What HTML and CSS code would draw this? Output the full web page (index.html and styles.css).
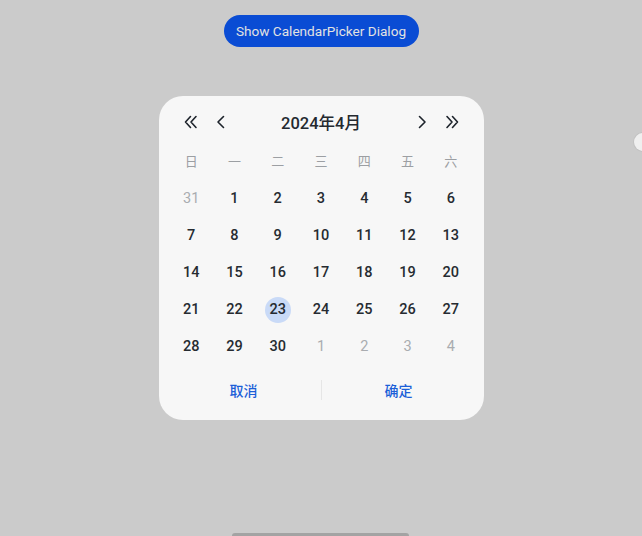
FILE: index.html
```html
<!DOCTYPE html>
<html lang="zh">
<head>
<meta charset="utf-8">
<link rel="stylesheet" href="styles.css">
</head>
<body>
<div class="page">
  <button class="show-btn">Show CalendarPicker Dialog</button>
  <div class="dialog">
    <div class="header">
      <span class="nav"><svg viewBox="0 0 24 24" width="24" height="24"><path d="M11.5 6.5 L6.5 12 L11.5 17.5 M17 6.5 L12 12 L17 17.5"/></svg></span>
      <span class="nav"><svg viewBox="0 0 24 24" width="24" height="24"><path d="M14.5 6.5 L9 12 L14.5 17.5"/></svg></span>
      <span class="title">2024年4月</span>
      <span class="nav"><svg viewBox="0 0 24 24" width="24" height="24"><path d="M9.5 6.5 L15 12 L9.5 17.5"/></svg></span>
      <span class="nav"><svg viewBox="0 0 24 24" width="24" height="24"><path d="M7 6.5 L12 12 L7 17.5 M12.5 6.5 L17.5 12 L12.5 17.5"/></svg></span>
    </div>
    <div class="weekdays">
      <span>日</span><span>一</span><span>二</span><span>三</span><span>四</span><span>五</span><span>六</span>
    </div>
    <div class="dates">
      <span class="muted">31</span><span>1</span><span>2</span><span>3</span><span>4</span><span>5</span><span>6</span>
      <span>7</span><span>8</span><span>9</span><span>10</span><span>11</span><span>12</span><span>13</span>
      <span>14</span><span>15</span><span>16</span><span>17</span><span>18</span><span>19</span><span>20</span>
      <span>21</span><span>22</span><span class="selected"><i>23</i></span><span>24</span><span>25</span><span>26</span><span>27</span>
      <span>28</span><span>29</span><span>30</span><span class="muted">1</span><span class="muted">2</span><span class="muted">3</span><span class="muted">4</span>
    </div>
    <div class="footer">
      <span class="action">取消</span>
      <span class="divider"></span>
      <span class="action">确定</span>
    </div>
  </div>
</div>
<div class="side-knob"></div>
<div class="home-bar"></div>
</body>
</html>
```
FILE: styles.css
```css
html, body {
  margin: 0;
  padding: 0;
}
body {
  width: 642px;
  height: 536px;
  overflow: hidden;
  background: #cbcbcb;
  font-family: Roboto, "Noto Sans CJK SC", sans-serif;
  position: relative;
}
.page {
  display: flex;
  flex-direction: column;
  align-items: center;
  padding-top: 15px;
}
.show-btn {
  height: 32px;
  width: 195px;
  border: none;
  border-radius: 16px;
  background: #0a4cd4;
  color: #e2e2e2;
  font-family: Roboto, sans-serif;
  font-size: 13.6px;
  font-weight: 400;
  padding: 0;
}
.dialog {
  margin-top: 49px;
  width: 325px;
  height: 324px;
  box-sizing: border-box;
  border-radius: 24px;
  background: #f7f7f7;
  padding: 0 11px;
  display: flex;
  flex-direction: column;
}
.header {
  height: 52px;
  display: flex;
  align-items: center;
  padding: 0 9px;
  gap: 6px;
}
.nav {
  width: 24px;
  height: 24px;
  display: flex;
}
.nav svg {
  fill: none;
  stroke: #1d232b;
  stroke-width: 1.6;
  stroke-linecap: round;
  stroke-linejoin: round;
}
.title {
  flex: 1;
  text-align: center;
  font-size: 16.5px;
  font-weight: 500;
  color: #24292f;
}
.weekdays {
  height: 24px;
  display: grid;
  grid-template-columns: repeat(7, 1fr);
  align-items: center;
  text-align: center;
  font-family: "Noto Sans CJK SC", sans-serif;
  font-size: 13px;
  color: #9c9fa3;
}
.dates {
  margin-top: 8px;
  display: grid;
  grid-template-columns: repeat(7, 1fr);
  grid-auto-rows: 37px;
  align-items: center;
  justify-items: center;
  font-size: 14.5px;
  font-weight: 500;
  color: #262b31;
}
.dates .muted {
  color: #a9acb0;
  font-weight: 400;
}
.dates .selected i {
  font-style: normal;
  width: 26px;
  height: 26px;
  border-radius: 50%;
  background: #c9daf7;
  display: flex;
  align-items: center;
  justify-content: center;
}
.footer {
  margin-top: 5px;
  height: 40px;
  display: flex;
  align-items: center;
}
.action {
  flex: 1;
  text-align: center;
  font-family: "Noto Sans CJK SC", sans-serif;
  font-size: 14px;
  font-weight: 500;
  color: #1c5fd8;
}
.action:first-child {
  padding-right: 3px;
}
.action:last-child {
  padding-left: 3px;
}
.divider {
  width: 1px;
  height: 20px;
  background: #e6e6e6;
}
.side-knob {
  position: absolute;
  left: 634px;
  top: 133px;
  width: 18px;
  height: 18px;
  border-radius: 50%;
  background: #efefef;
  box-shadow: 0 0 0 1px #c2c2c2;
}
.home-bar {
  position: absolute;
  left: 232px;
  top: 533px;
  width: 177px;
  height: 6px;
  border-radius: 3px;
  background: #a3a3a3;
}
```
